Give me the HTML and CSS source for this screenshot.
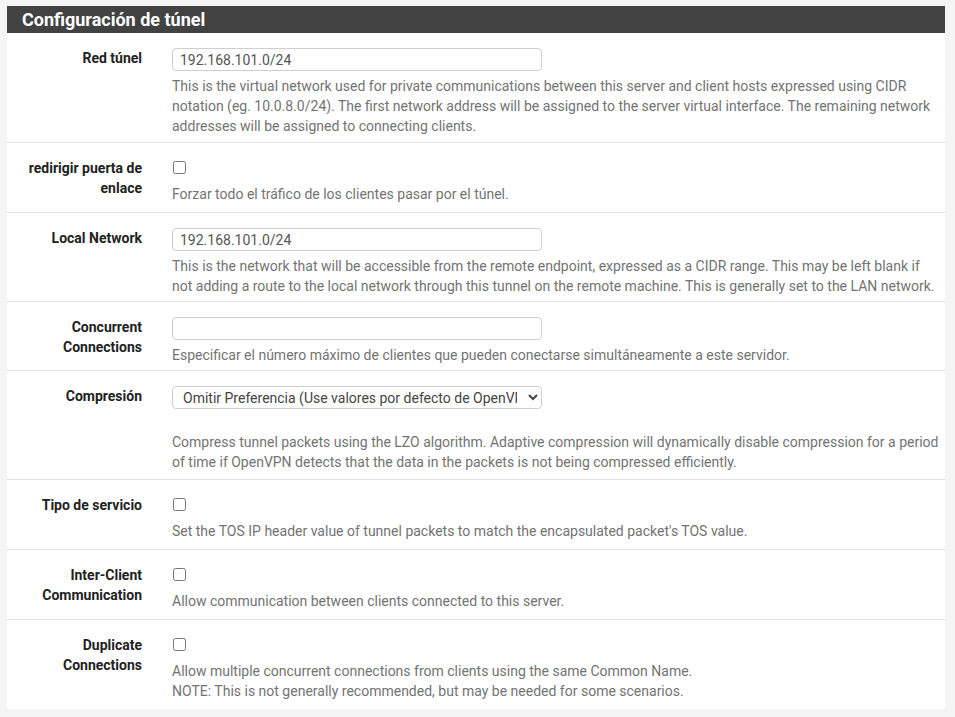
FILE: index.html
```html
<!DOCTYPE html>
<html lang="es">
<head>
<meta charset="utf-8">
<title>Configuración de túnel</title>
<link rel="stylesheet" href="styles.css">
</head>
<body>
<div class="panel">
  <div class="panel-heading"><h2 class="panel-title">Configuración de túnel</h2></div>
  <div class="panel-body">
    <div class="row row-input first">
      <label class="lbl">Red túnel</label>
      <div class="val">
        <input class="form-control" type="text" value="192.168.101.0/24">
        <div class="help">This is the virtual network used for private communications between this server and client hosts expressed using CIDR notation (eg. 10.0.8.0/24). The first network address will be assigned to the server virtual interface. The remaining network addresses will be assigned to connecting clients.</div>
      </div>
    </div>
    <div class="row row-check">
      <label class="lbl">redirigir puerta de enlace</label>
      <div class="val">
        <div class="check"><input type="checkbox"></div>
        <div class="help">Forzar todo el tráfico de los clientes pasar por el túnel.</div>
      </div>
    </div>
    <div class="row row-input">
      <label class="lbl">Local Network</label>
      <div class="val">
        <input class="form-control" type="text" value="192.168.101.0/24">
        <div class="help">This is the network that will be accessible from the remote endpoint, expressed as a CIDR range. This may be left blank if not adding a route to the local network through this tunnel on the remote machine. This is generally set to the LAN network.</div>
      </div>
    </div>
    <div class="row row-input">
      <label class="lbl">Concurrent Connections</label>
      <div class="val">
        <input class="form-control" type="text" value="">
        <div class="help">Especificar el número máximo de clientes que pueden conectarse simultáneamente a este servidor.</div>
      </div>
    </div>
    <div class="row row-select">
      <label class="lbl">Compresión</label>
      <div class="val">
        <select class="form-control select">
          <option>Omitir Preferencia (Use valores por defecto de OpenVPN)</option>
        </select>
        <div class="help help-gap">Compress tunnel packets using the LZO algorithm. Adaptive compression will dynamically disable compression for a period of time if OpenVPN detects that the data in the packets is not being compressed efficiently.</div>
      </div>
    </div>
    <div class="row row-check">
      <label class="lbl">Tipo de servicio</label>
      <div class="val">
        <div class="check"><input type="checkbox"></div>
        <div class="help">Set the TOS IP header value of tunnel packets to match the encapsulated packet's TOS value.</div>
      </div>
    </div>
    <div class="row row-check">
      <label class="lbl">Inter-Client Communication</label>
      <div class="val">
        <div class="check"><input type="checkbox"></div>
        <div class="help">Allow communication between clients connected to this server.</div>
      </div>
    </div>
    <div class="row row-check last">
      <label class="lbl">Duplicate Connections</label>
      <div class="val">
        <div class="check"><input type="checkbox"></div>
        <div class="help">Allow multiple concurrent connections from clients using the same Common Name.<br>NOTE: This is not generally recommended, but may be needed for some scenarios.</div>
      </div>
    </div>
  </div>
</div>
</body>
</html>
```
FILE: styles.css
```css
html, body {
  background: #f5f5f5;
}
body {
  margin: 6px 10px 0 7px;
  font-family: Roboto, "Liberation Sans", Arial, sans-serif;
  font-size: 14px;
  line-height: 20px;
  color: #212121;
}
.panel {
  background: #fff;
  box-shadow: 0 1px 3px rgba(0, 0, 0, 0.22);
}
.panel-heading {
  background: #424242;
  height: 27px;
  display: flex;
  align-items: center;
  padding: 0 15px;
}
.panel-title {
  margin: 0;
  color: #fff;
  font-size: 18px;
  font-weight: 700;
  line-height: 20px;
}
.row {
  display: grid;
  grid-template-columns: 150px 1fr;
  padding: 15px 0 5px;
  border-bottom: 1px solid #e3e3e3;
}
.row.first {
  padding-bottom: 6px;
}
.row.last {
  border-bottom: none;
}
.row-check {
  padding-bottom: 8px;
}
.row-select {
  padding-bottom: 7px;
}
.lbl {
  padding: 0 15px;
  text-align: right;
  font-weight: 700;
  color: #222;
}
.val {
  padding: 0 5px 0 15px;
  min-width: 0;
}
.form-control {
  display: block;
  box-sizing: border-box;
  width: 370px;
  height: 23px;
  padding: 0 7px;
  border: 1px solid #cfcfcf;
  border-radius: 4px;
  font-family: Roboto, "Liberation Sans", Arial, sans-serif;
  font-size: 14px;
  color: #555;
  background: #fff;
  margin: 0;
}
.select {
  padding: 0 8px 0 6px;
  color: #444;
}
.check {
  height: 18px;
}
.check input {
  margin: 3px 0 0 1px;
  width: 13px;
  height: 13px;
  display: block;
}
.help {
  margin-top: 5px;
  color: #737373;
}
.help-gap {
  margin-top: 23px;
}
```
